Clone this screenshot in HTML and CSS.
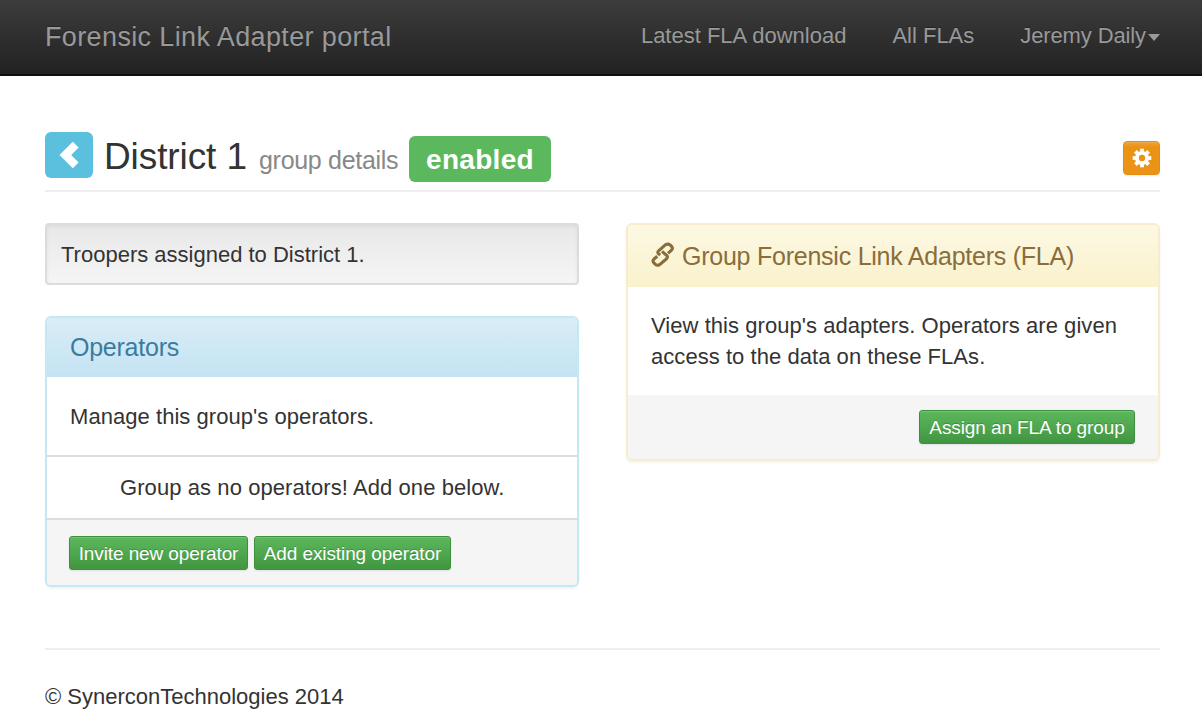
FILE: index.html
```html
<!DOCTYPE html>
<html lang="en">
<head>
<meta charset="utf-8">
<title>Forensic Link Adapter portal</title>
<link rel="stylesheet" href="styles.css">
</head>
<body>
<nav class="navbar">
  <a class="brand">Forensic Link Adapter portal</a>
  <div class="nav-links">
    <a class="nav-download">Latest FLA download</a>
    <a class="nav-all">All FLAs</a>
    <a class="nav-user">Jeremy Daily<span class="caret"></span></a>
  </div>
</nav>
<main class="container">
  <header class="page-header">
    <a class="back" aria-label="Back"><svg width="20" height="28" viewBox="0 0 20 28"><path d="M0.5 14 13.8 0.8 19.6 6.6 12.2 14 19.6 21.4 13.8 27.2Z" fill="#fff"/></svg></a>
    <h1>District 1</h1>
    <small>group details</small>
    <span class="label">enabled</span>
    <a class="settings" aria-label="Settings"><svg width="20" height="20" viewBox="-10 -10 20 20"><g fill="#fff"><rect x="-1.9" y="-9.3" width="3.8" height="18.6"/><rect x="-1.9" y="-9.3" width="3.8" height="18.6" transform="rotate(45)"/><rect x="-1.9" y="-9.3" width="3.8" height="18.6" transform="rotate(90)"/><rect x="-1.9" y="-9.3" width="3.8" height="18.6" transform="rotate(135)"/><circle r="7"/></g><circle r="3.2" fill="#eb9316"/></svg></a>
  </header>
  <div class="columns">
    <section class="column">
      <div class="well">Troopers assigned to District 1.</div>
      <div class="panel panel-info">
        <h2 class="panel-heading">Operators</h2>
        <p class="panel-body manage">Manage this group's operators.</p>
        <p class="panel-row">Group as no operators! Add one below.</p>
        <div class="panel-footer"><a class="btn invite">Invite new operator</a><a class="btn existing">Add existing operator</a></div>
      </div>
    </section>
    <section class="column">
      <div class="panel panel-warning">
        <h2 class="panel-heading"><svg class="link-icon" width="24" height="26" viewBox="0 0 24 26" fill="none" stroke="#8a6d3b" stroke-width="3.1" stroke-linejoin="round"><path d="M17 11.4 20.5 8.2Q22.1 6.4 20.8 4.7L19 2.9Q17.2 1.5 14.6 2.7L7.6 8.8Q6 10.5 7.7 11.9L9.2 13.2"/><path d="M6.3 14.2 3 17Q1.3 18.7 2.6 20.5L4.4 22.4Q6.2 24 8.7 22.6L15.6 16.7Q17.2 15 15.6 13.4L11 9.3"/></svg><span>Group Forensic Link Adapters (FLA)</span></h2>
        <p class="panel-body">View this group's adapters. Operators are given<br>access to the data on these FLAs.</p>
        <div class="panel-footer right"><a class="btn assign">Assign an FLA to group</a></div>
      </div>
    </section>
  </div>
  <footer class="page-footer">© SynerconTechnologies 2014</footer>
</main>
</body>
</html>
```
FILE: styles.css
```css
* { box-sizing: border-box; }
body { margin: 0; background: #fff; color: #333; font: 22px/31px "Liberation Sans", Arial, sans-serif; height: 720px; overflow: hidden; }
h1, h2, p { margin: 0; font-weight: 400; }
svg { display: block; flex: none; }
a, span, h1, small { white-space: nowrap; }
.navbar { height: 76px; padding: 0 42px 3px 45px; display: flex; align-items: center; justify-content: space-between; background: linear-gradient(#3c3c3c, #222); border-bottom: 2px solid #101010; color: #999; text-shadow: 0 -1px 0 rgba(0,0,0,.25); }
.brand { font-size: 27px; letter-spacing: .37px; padding-top: 3px; }
.nav-links { display: flex; gap: 46px; }
.nav-user { display: flex; align-items: center; letter-spacing: -.12px; }
.caret { margin: 3px 0 0 2px; border: 6.5px solid transparent; border-top: 7px solid #999; border-bottom: 0; }
.container { padding: 56px 42px 0 45px; }
.page-header { display: flex; height: 60px; align-items: flex-start; border-bottom: 2px solid #eee; }
.back { width: 48px; height: 46px; border-radius: 6px; background: #5bc0de; display: flex; align-items: center; justify-content: center; }
.page-header h1 { margin: 5px 0 0 11px; width: 141px; font-size: 37px; line-height: 40px; letter-spacing: -.1px; }
.page-header small { margin: 11px 0 0 14px; width: 139px; color: #888; font-size: 25px; line-height: 34px; letter-spacing: -.3px; }
.label { margin: 4px 0 0 11px; width: 142px; height: 46px; border-radius: 6px; background: #5cb85c; color: #fff; font-size: 28px; font-weight: 700; line-height: 47px; text-align: center; letter-spacing: .3px; }
.settings { margin: 9px 0 0 auto; width: 37px; height: 34px; border: 1px solid #e38d13; border-radius: 4px; background: linear-gradient(#eea236, #eb9316 15%); display: flex; align-items: center; justify-content: center; box-shadow: inset 0 1px 0 rgba(255,255,255,.15), 0 1px 2px rgba(0,0,0,.08); }
.columns { margin-top: 31px; display: grid; grid-template-columns: 534px 534px; gap: 47px; height: 425px; align-items: start; }
.well { height: 62px; border: 2px solid #dcdcdc; border-radius: 4px; padding: 14px; background: linear-gradient(#e8e8e8, #f5f5f5); box-shadow: inset 0 2px 4px rgba(0,0,0,.05); }
.panel { border: 2px solid; border-radius: 6px; overflow: hidden; box-shadow: 0 2px 3px rgba(0,0,0,.05); }
.panel-info { margin-top: 31px; border-color: #c1eaf2; }
.panel-warning { border-color: #faebcc; }
.panel-heading { display: flex; align-items: center; font-size: 25px; letter-spacing: -.24px; padding: 0 23px; }
.panel-info .panel-heading { height: 59px; background: linear-gradient(#d9edf7, #c4e3f3); color: #3b7c9c; }
.panel-warning .panel-heading { height: 62px; background: linear-gradient(#fcf8e3, #faf2cc); color: #8a6d3b; padding-top: 1px; }
.link-icon { margin: -4px 7px 0 0; }
.panel-body { padding: 23px; letter-spacing: .05px; }
.panel-info .panel-body { padding: 24px 23px 23px; }
.panel-row { height: 63px; border-top: 2px solid #ddd; padding: 15px 60px 0 73px; letter-spacing: .08px; white-space: nowrap; }
.panel-footer { background: #f5f5f5; height: 64px; display: flex; align-items: center; gap: 6px; padding: 0 23px; }
.panel-info .panel-footer { height: 67px; border-top: 2px solid #ddd; }
.right { justify-content: flex-end; }
.btn { height: 34px; border: 1px solid #3e8f3e; border-radius: 3px; background: linear-gradient(#5cb85c, #419641); color: #fff; font-size: 19px; line-height: 33px; letter-spacing: -.1px; text-align: center; text-shadow: 0 -1px 0 rgba(0,0,0,.2); box-shadow: inset 0 1px 0 rgba(255,255,255,.15), 0 1px 2px rgba(0,0,0,.08); }
.panel-info .btn { margin-left: -1px; margin-right: 1px; }
.invite { width: 179px; }
.existing { width: 197px; }
.assign { width: 216px; }
.page-footer { border-top: 2px solid #eee; padding-top: 31px; }
```
